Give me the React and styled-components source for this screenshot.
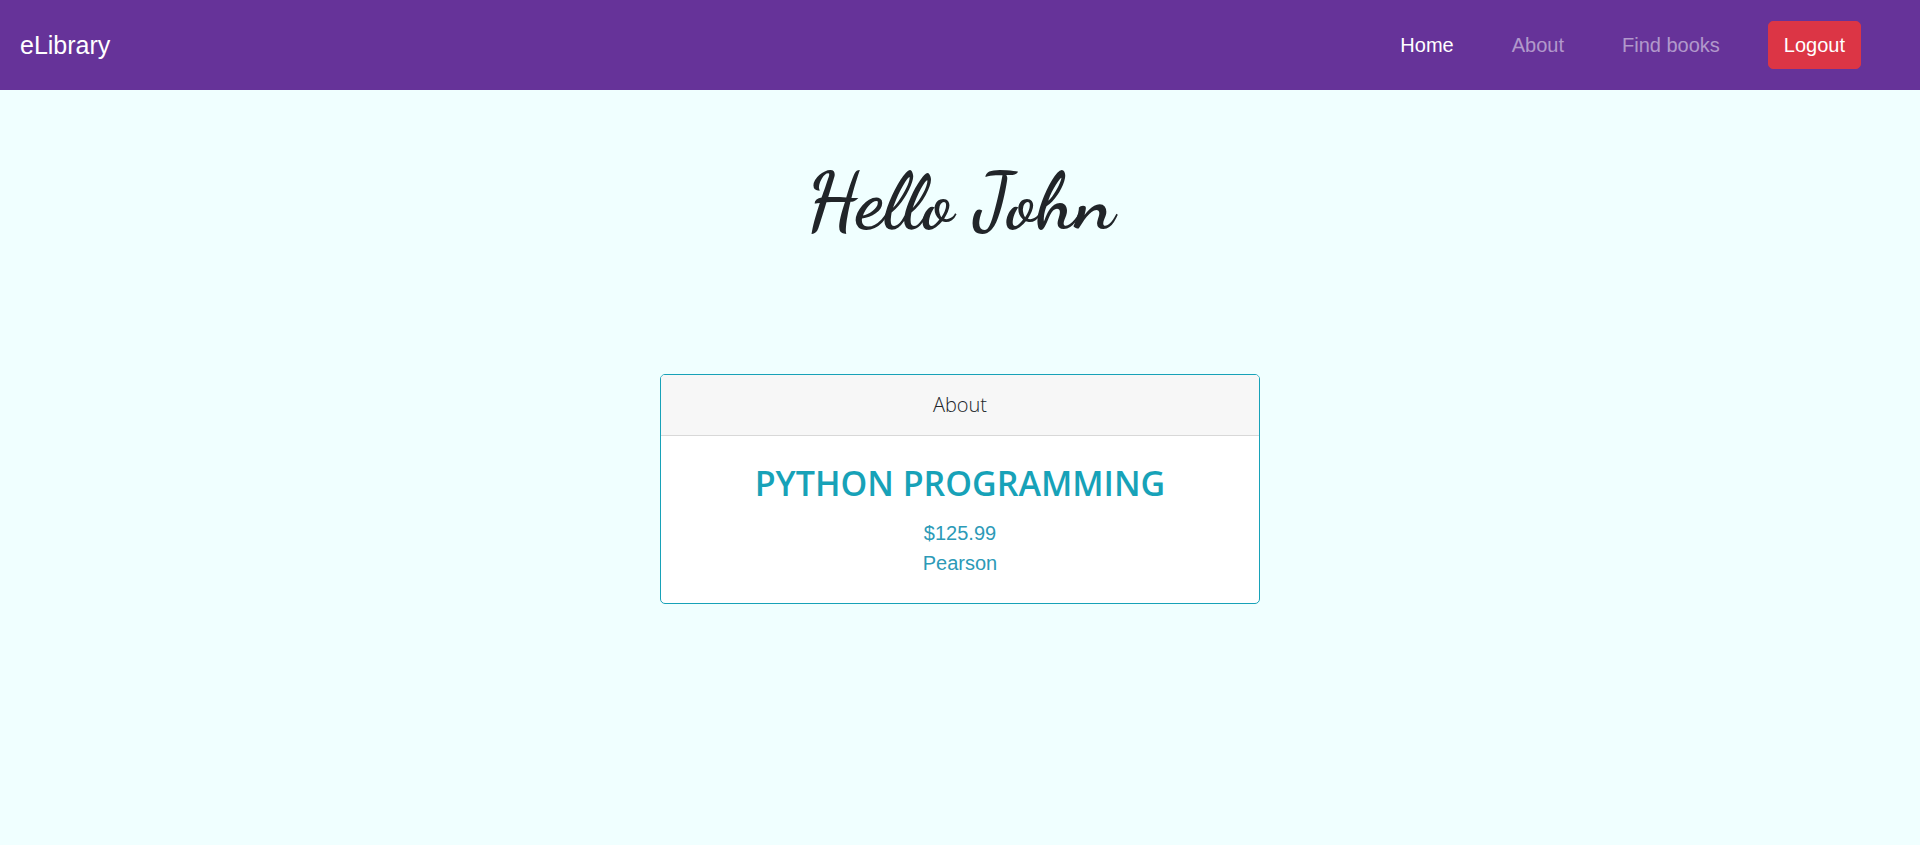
import React from "react";
import styled, { createGlobalStyle } from "styled-components";

const GlobalStyle = createGlobalStyle`
  *, *::before, *::after { box-sizing: border-box; }
  body {
    margin: 0;
    background: #f0ffff;
    color: #212529;
    font-family: "Liberation Sans", Arial, sans-serif;
    font-size: 20px;
    line-height: 30px;
  }
`;

const Navbar = styled.nav`
  display: flex;
  align-items: center;
  justify-content: space-between;
  min-height: 90px;
  padding: 20px;
  background: #663399;
`;

const Brand = styled.a`
  color: #fff;
  font-size: 25px;
  text-decoration: none;
`;

const NavList = styled.ul`
  display: flex;
  align-items: center;
  gap: 38px;
  margin: 0;
  padding: 0 39px 0 0;
  list-style: none;
`;

const NavLink = styled.a`
  display: block;
  padding: 10px;
  color: ${({ $active }) => ($active ? "#fff" : "rgba(255, 255, 255, 0.5)")};
  text-decoration: none;
`;

const LogoutButton = styled.button`
  display: block;
  height: 48px;
  padding: 0 15px;
  border: 1px solid #dc3545;
  border-radius: 5px;
  background: #dc3545;
  color: #fff;
  font: inherit;
  cursor: pointer;
`;

const Main = styled.main`
  display: flex;
  flex-direction: column;
  align-items: center;
  gap: 122px;
  padding: 60px 20px;
`;

const Greeting = styled.h1`
  margin: 0;
  font-family: "Dancing Script", cursive;
  font-size: 80px;
  font-weight: 700;
  line-height: 102px;
  text-align: center;
`;

const Card = styled.section`
  width: 100%;
  max-width: 600px;
  border: 1px solid #17a2b8;
  border-radius: 5px;
  background: #fff;
  text-align: center;
  overflow: hidden;
`;

const CardHeader = styled.header`
  padding: 15px 25px;
  border-bottom: 1px solid #d8d8d8;
  background: #f7f7f7;
  font-family: "Segoe UI", "Open Sans", sans-serif;
  font-weight: 300;
`;

const CardBody = styled.div`
  padding: 25px;
  color: #17a2b8;
`;

const BookTitle = styled.h2`
  margin: 0 0 13px;
  font-family: "Segoe UI", "Open Sans", sans-serif;
  font-size: 34px;
  font-weight: 600;
  line-height: 44px;
`;

const BookDetail = styled.p`
  margin: 0;
  color: #2c9ab7;
`;

const links = [
  { label: "Home", active: true },
  { label: "About" },
  { label: "Find books" },
];

export default function App() {
  return (
    <>
      <GlobalStyle />
      <Navbar>
        <Brand href="#">eLibrary</Brand>
        <NavList>
          {links.map(({ label, active }) => (
            <li key={label}>
              <NavLink href="#" $active={active} aria-current={active ? "page" : undefined}>
                {label}
              </NavLink>
            </li>
          ))}
          <li>
            <LogoutButton type="button">Logout</LogoutButton>
          </li>
        </NavList>
      </Navbar>
      <Main>
        <Greeting>Hello John</Greeting>
        <Card>
          <CardHeader>About</CardHeader>
          <CardBody>
            <BookTitle>PYTHON PROGRAMMING</BookTitle>
            <BookDetail>$125.99</BookDetail>
            <BookDetail>Pearson</BookDetail>
          </CardBody>
        </Card>
      </Main>
    </>
  );
}
